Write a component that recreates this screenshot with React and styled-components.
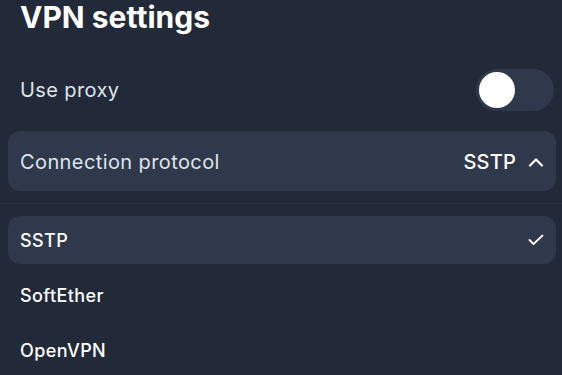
import React, { useState } from 'react';
import styled, { createGlobalStyle } from 'styled-components';

const GlobalStyle = createGlobalStyle`
  html, body {
    margin: 0;
    padding: 0;
    background: #222938;
    font-family: Inter, "Noto Sans", sans-serif;
    -webkit-font-smoothing: antialiased;
  }
`;

const Page = styled.div`
  width: 562px;
  height: 375px;
  overflow: hidden;
  background: #222938;
  padding: 0 6px 0 8px;
  box-sizing: border-box;
  display: flex;
  flex-direction: column;
`;

const Title = styled.h1`
  margin: 0 0 25px 12px;
  font-size: 30px;
  line-height: 34px;
  font-weight: 700;
  color: #ffffff;
`;

const Row = styled.div`
  height: 60px;
  display: flex;
  align-items: center;
  justify-content: space-between;
  padding: 1px 2px 0 12px;
  box-sizing: border-box;
`;

const Label = styled.span`
  font-size: 20px;
  font-weight: 400;
  letter-spacing: 0.4px;
  color: #dfe4ec;
`;

const Toggle = styled.button`
  width: 78px;
  height: 42px;
  border: none;
  border-radius: 21px;
  padding: 3px;
  background: ${({ on }) => (on ? '#3b82f6' : '#2f394b')};
  display: flex;
  justify-content: ${({ on }) => (on ? 'flex-end' : 'flex-start')};
  cursor: pointer;
`;

const Knob = styled.span`
  width: 36px;
  height: 36px;
  border-radius: 50%;
  background: #ffffff;
`;

const Select = styled.button`
  margin-top: 12px;
  height: 60px;
  width: 100%;
  border: none;
  border-radius: 12px;
  background: #2f394b;
  display: flex;
  align-items: center;
  justify-content: space-between;
  padding: 1px 12px 0 12px;
  box-sizing: border-box;
  font-family: inherit;
  cursor: pointer;
`;

const Current = styled.span`
  display: flex;
  align-items: center;
  gap: 12px;
  font-size: 20px;
  font-weight: 500;
  letter-spacing: 0.2px;
  color: #ffffff;
`;

const Divider = styled.hr`
  margin: 12px -6px 12px -8px;
  border: none;
  height: 1px;
  background: #2c3443;
`;

const List = styled.ul`
  list-style: none;
  margin: 0;
  padding: 0;
  display: flex;
  flex-direction: column;
  gap: 7px;
`;

const Option = styled.li`
  height: 48px;
  border-radius: 12px;
  background: ${({ selected }) => (selected ? '#2f394b' : 'transparent')};
  display: flex;
  align-items: center;
  justify-content: space-between;
  padding: 0 12px 0 12px;
  font-size: 18px;
  font-weight: 500;
  letter-spacing: 0.4px;
  color: #ffffff;
  cursor: pointer;
`;

const ChevronUp = () => (
  <svg width="16" height="10" viewBox="0 0 16 10" fill="none">
    <path d="M2 8.5 L8 2.5 L14 8.5" stroke="#fff" strokeWidth="2.2" strokeLinecap="round" strokeLinejoin="round" />
  </svg>
);

const Check = () => (
  <svg width="16" height="12" viewBox="0 0 16 12" fill="none">
    <path d="M1.5 6 L5.5 10 L14.5 1.5" stroke="#fff" strokeWidth="1.8" strokeLinecap="round" strokeLinejoin="round" />
  </svg>
);

const protocols = ['SSTP', 'SoftEther', 'OpenVPN'];

const App = () => {
  const [proxy, setProxy] = useState(false);
  const [protocol, setProtocol] = useState('SSTP');

  return (
    <>
      <GlobalStyle />
      <Page>
        <Title>VPN settings</Title>
        <Row>
          <Label>Use proxy</Label>
          <Toggle on={proxy ? 1 : 0} onClick={() => setProxy(!proxy)}>
            <Knob />
          </Toggle>
        </Row>
        <Select>
          <Label>Connection protocol</Label>
          <Current>
            {protocol}
            <ChevronUp />
          </Current>
        </Select>
        <Divider />
        <List>
          {protocols.map((p) => (
            <Option key={p} selected={p === protocol} onClick={() => setProtocol(p)}>
              {p}
              {p === protocol && <Check />}
            </Option>
          ))}
        </List>
      </Page>
    </>
  );
};

export default App;
